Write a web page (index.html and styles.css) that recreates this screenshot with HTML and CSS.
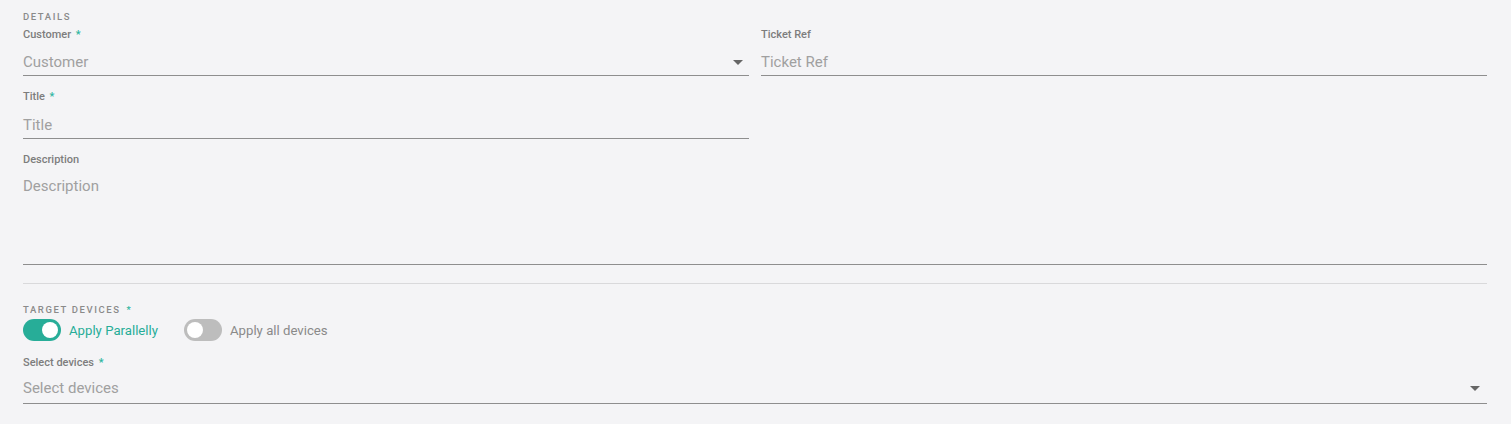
FILE: index.html
```html
<!DOCTYPE html>
<html>
<head>
<meta charset="utf-8">
<link rel="stylesheet" href="styles.css">
</head>
<body>
<form class="form">
  <div class="section-title">DETAILS</div>
  <div class="row">
    <div class="field">
      <label class="label">Customer <span class="req">*</span></label>
      <div class="control">
        <span class="placeholder">Customer</span>
        <svg class="caret" width="10" height="5" viewBox="0 0 10 5"><path d="M0 0h10L5 5z" fill="#666"/></svg>
      </div>
    </div>
    <div class="field">
      <label class="label">Ticket Ref</label>
      <div class="control"><span class="placeholder">Ticket Ref</span></div>
    </div>
  </div>
  <div class="row">
    <div class="field title">
      <label class="label">Title <span class="req">*</span></label>
      <div class="control"><span class="placeholder">Title</span></div>
    </div>
    <div></div>
  </div>
  <div class="field">
    <label class="label">Description</label>
    <div class="control textarea"><span class="placeholder">Description</span></div>
  </div>
  <hr class="divider">
  <div class="section-title">TARGET DEVICES <span class="req">*</span></div>
  <div class="toggles">
    <div class="toggle on"><span class="track"><span class="knob"></span></span><span class="toggle-text">Apply Parallelly</span></div>
    <div class="toggle"><span class="track"><span class="knob"></span></span><span class="toggle-text">Apply all devices</span></div>
  </div>
  <div class="field devices">
    <label class="label">Select devices <span class="req">*</span></label>
    <div class="control">
      <span class="placeholder">Select devices</span>
      <svg class="caret" width="10" height="5" viewBox="0 0 10 5"><path d="M0 0h10L5 5z" fill="#666"/></svg>
    </div>
  </div>
</form>
</body>
</html>
```
FILE: styles.css
```css
html, body {
  margin: 0;
  background: #f4f4f6;
}
body {
  font-family: Roboto, "Liberation Sans", sans-serif;
  color: #333;
}
.form {
  padding: 11px 24px 0 23px;
  display: flex;
  flex-direction: column;
}
.section-title {
  font-size: 9.5px;
  font-weight: 500;
  letter-spacing: 1.6px;
  color: #8a8a8a;
  line-height: 12px;
}
.req {
  color: #2bb59f;
  margin-left: 2px;
}
.row {
  display: grid;
  grid-template-columns: 1fr 1fr;
  column-gap: 12px;
}
.field {
  display: flex;
  flex-direction: column;
}
.label {
  font-size: 11px;
  font-weight: 500;
  color: #7d7d7d;
  line-height: 14px;
  margin-top: 5px;
}
.control {
  display: flex;
  align-items: center;
  justify-content: space-between;
  height: 26px;
  padding-top: 7px;
  border-bottom: 1px solid #8e8e8e;
  margin-bottom: 9px;
}
.title .control {
  height: 26px;
  padding-top: 8px;
}
.placeholder {
  font-size: 15px;
  color: #a0a0a0;
}
.caret {
  margin-right: 6px;
}
.textarea {
  align-items: flex-start;
  padding-top: 10px;
  height: 87px;
  margin-bottom: 0;
}
.divider {
  border: 0;
  border-top: 1px solid #d9d9db;
  margin: 18px 0 20px;
}
.toggles {
  display: flex;
  gap: 26px;
  margin-top: 3px;
}
.toggle {
  display: flex;
  align-items: center;
  gap: 8px;
}
.track {
  width: 38px;
  height: 22px;
  border-radius: 11px;
  background: #bdbdbd;
  display: flex;
  align-items: center;
  padding: 0 3px;
  box-sizing: border-box;
}
.knob {
  width: 16px;
  height: 16px;
  border-radius: 50%;
  background: #fff;
}
.toggle.on .track {
  background: #27ad98;
  justify-content: flex-end;
}
.toggle-text {
  font-size: 13.2px;
  color: #8a8a8a;
}
.toggle.on .toggle-text {
  color: #27ad98;
}
.devices .label {
  margin-top: 15px;
}
.devices .control {
  height: 30px;
  padding-top: 3px;
  margin-bottom: 0;
}
.devices .caret {
  margin-right: 7px;
}
```
